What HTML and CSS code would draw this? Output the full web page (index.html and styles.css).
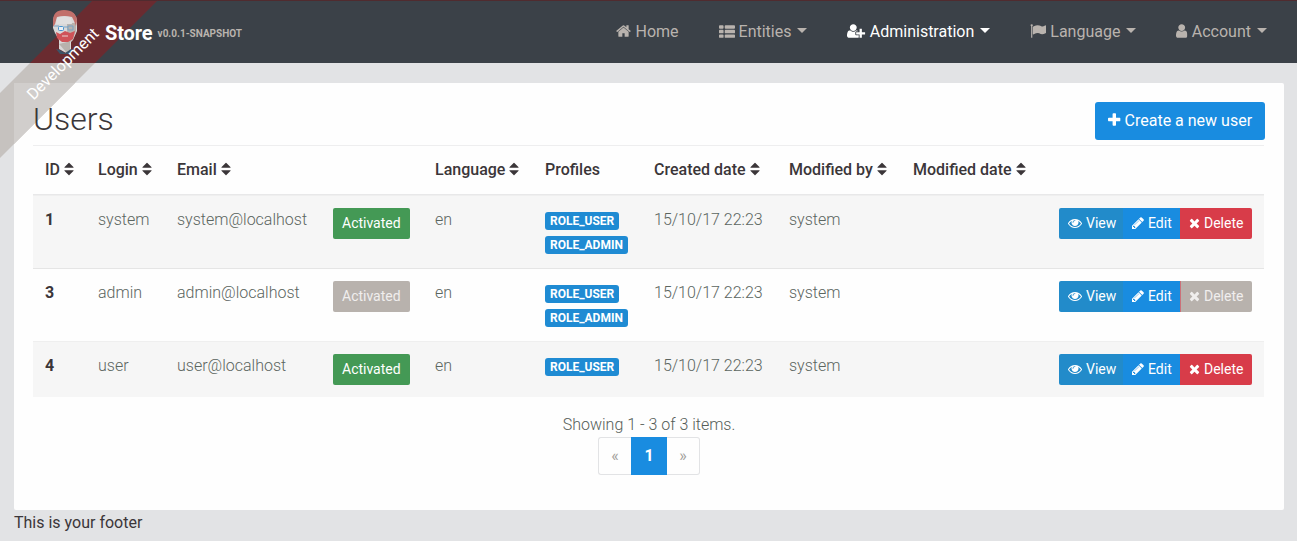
FILE: index.html
```
<!DOCTYPE html>
<html lang="en">
<head>
<meta charset="utf-8">
<title>Users</title>
<link rel="stylesheet" href="styles.css">
</head>
<body>
<svg class="sprite" aria-hidden="true">
<symbol id="home" viewBox="64 0 1664 1792"><path d="M1472 992v480q0 26-19 45t-45 19h-384v-384h-256v384h-384q-26 0-45-19t-19-45v-480q0-1 .5-3t.5-3l575-474 575 474q1 2 1 6zm223-69l-62 74q-8 9-21 11h-3q-13 0-21-7l-692-577-692 577q-12 8-24 7-13-2-21-11l-62-74q-8-10-7-23.5t11-21.5l719-599q32-26 76-26t76 26l244 204v-195q0-14 9-23t23-9h192q14 0 23 9t9 23v408l219 182q10 8 11 21.5t-7 23.5z"/></symbol>
<symbol id="list" viewBox="0 0 1792 1792"><path d="M96 256h320q96 0 96 96v192q0 96-96 96H96q-96 0-96-96V352q0-96 96-96zm640 0h960q96 0 96 96v192q0 96-96 96H736q-96 0-96-96V352q0-96 96-96zM96 768h320q96 0 96 96v192q0 96-96 96H96q-96 0-96-96V864q0-96 96-96zm640 0h960q96 0 96 96v192q0 96-96 96H736q-96 0-96-96V864q0-96 96-96zM96 1280h320q96 0 96 96v192q0 96-96 96H96q-96 0-96-96v-192q0-96 96-96zm640 0h960q96 0 96 96v192q0 96-96 96H736q-96 0-96-96v-192q0-96 96-96z"/></symbol>
<symbol id="user-plus" viewBox="0 0 2048 1792"><path d="M704 896q-159 0-271.5-112.5t-112.5-271.5 112.5-271.5 271.5-112.5 271.5 112.5 112.5 271.5-112.5 271.5-271.5 112.5zm960 128h352q13 0 22.5 9.5t9.5 22.5v192q0 13-9.5 22.5t-22.5 9.5h-352v352q0 13-9.5 22.5t-22.5 9.5h-192q-13 0-22.5-9.5t-9.5-22.5v-352h-352q-13 0-22.5-9.5t-9.5-22.5v-192q0-13 9.5-22.5t22.5-9.5h352v-352q0-13 9.5-22.5t22.5-9.5h192q13 0 22.5 9.5t9.5 22.5v352zm-736 224q0 52 38 90t90 38h256v238q-68 50-171 50h-874q-121 0-194-69t-73-190q0-53 3.5-103.5t14-109 26.5-108.5 43-97.5 62-81 85.5-53.5 111.5-20q19 0 39 17 79 61 154.5 91.5t164.5 30.5 164.5-30.5 154.5-91.5q20-17 39-17 132 0 217 96h-223q-52 0-90 38t-38 90v192z"/></symbol>
<symbol id="flag" viewBox="0 0 1792 1792"><path d="M320 256q0 72-64 110v1266q0 13-9.5 22.5t-22.5 9.5h-64q-13 0-22.5-9.5t-9.5-22.5v-1266q-64-38-64-110 0-53 37.5-90.5t90.5-37.5 90.5 37.5 37.5 90.5zm1472 64v763q0 25-12.5 38.5t-39.5 27.5q-215 116-369 116-61 0-123.5-22t-108.5-48-115.5-48-142.5-22q-192 0-464 146-17 9-33 9-26 0-45-19t-19-45v-742q0-32 31-55 21-14 79-43 236-120 421-120 107 0 200 29t219 88q38 19 88 19 54 0 117.5-21t110-47 88-47 54.5-21q26 0 45 19t19 45z"/></symbol>
<symbol id="user" viewBox="256 0 1280 1792"><path d="M1536 1399q0 109-62.5 187t-150.5 78h-854q-88 0-150.5-78t-62.5-187q0-85 8.5-160.5t31.5-152 58.5-131 94-89 134.5-34.5q131 128 313 128t313-128q76 0 134.5 34.5t94 89 58.5 131 31.5 152 8.500 160.500zm-256-887q0 159-112.5 271.5t-271.5 112.5-271.5-112.5-112.5-271.5 112.5-271.5 271.5-112.5 271.5 112.5 112.5 271.5z"/></symbol>
<symbol id="plus" viewBox="192 0 1408 1792"><path d="M1600 736v192q0 40-28 68t-68 28h-416v416q0 40-28 68t-68 28h-192q-40 0-68-28t-28-68v-416h-416q-40 0-68-28t-28-68v-192q0-40 28-68t68-28h416v-416q0-40 28-68t68-28h192q40 0 68 28t28 68v416h416q40 0 68 28t28 68z"/></symbol>
<symbol id="sort" viewBox="384 0 1024 1792"><path d="M1408 1088q0 26-19 45l-448 448q-19 19-45 19t-45-19l-448-448q-19-19-19-45t19-45 45-19h896q26 0 45 19t19 45zm0-384q0 26-19 45t-45 19h-896q-26 0-45-19t-19-45 19-45l448-448q19-19 45-19t45 19l448 448q19 19 19 45z"/></symbol>
<symbol id="eye" viewBox="0 0 1792 1792"><path d="M1664 960q-152-236-381-353 61 104 61 225 0 185-131.5 316.5t-316.5 131.5-316.5-131.5-131.5-316.5q0-121 61-225-229 117-381 353 133 205 333.5 326.5t434.5 121.5 434.5-121.5 333.5-326.5zm-720-384q0-20-14-34t-34-14q-125 0-214.5 89.5t-89.5 214.5q0 20 14 34t34 14 34-14 14-34q0-86 61-147t147-61q20 0 34-14t14-34zm848 384q0 34-20 69-140 230-376.5 368.5t-499.5 138.5-499.5-139-376.5-368q-20-35-20-69t20-69q140-229 376.5-368t499.5-139 499.5 139 376.5 368q20 35 20 69z"/></symbol>
<symbol id="pencil" viewBox="128 0 1536 1792"><path d="M491 1536l91-91-235-235-91 91v107h128v128h107zm523-928q0-22-22-22-10 0-17 7l-542 542q-7 7-7 17 0 22 22 22 10 0 17-7l542-542q7-7 7-17zm-54-192l416 416-832 832h-416v-416zm683 96q0 53-37 90l-166 166-416-416 166-165q36-38 90-38 53 0 91 38l235 234q37 39 37 91z"/></symbol>
<symbol id="times" viewBox="192 0 1408 1792"><path d="M1490 1322q0 40-28 68l-136 136q-28 28-68 28t-68-28l-294-294-294 294q-28 28-68 28t-68-28l-136-136q-28-28-28-68t28-68l294-294-294-294q-28-28-28-68t28-68l136-136q28-28 68-28t68 28l294 294 294-294q28-28 68-28t68 28l136 136q28 28 28 68t-28 68l-294 294 294 294q28 28 28 68z"/></symbol>
</svg>
<div class="ribbon"></div>
<span class="ribbon-text">Development</span>
<nav class="navbar">
  <a class="brand">
    <svg class="logo" viewBox="0 0 28 46">
      <path fill="#d9d8d8" d="M2 13Q3 3 14 3t12 10v10l-4 9-2 2v9l-5 2-7-4V32L4 25 2 20z"/>
      <path fill="#b8b2ad" d="M16 15h9v8l-3 8-3 3v8l-4 2-7-8 8-2z"/>
      <path fill="#c2706b" d="M2 13Q2 2 13 2q12 0 13 11l-1 5-2-5-2-4q-8-2-15 0l-2 7-2 3z"/>
      <path fill="#e0dfdf" d="M6 10q8-3 14 0l1 6H5z"/>
      <path fill="#cf5358" d="M5 24l4 2 5-3 5 2 5-2-2 8-5 3h-6l-5-4z"/>
      <path fill="none" stroke="#e6d5d2" d="M11 28h6"/>
      <g fill="#e9eef3" stroke="#4592cf"><rect x="7.500" y="18.500" width="5" height="4" rx="1"/></g>
      <path fill="none" stroke="#78a3c5" d="M3 18h5m5 1h4m0-1h5v4h-5z"/>
      <path fill="#3d5266" d="M5 41l4 1 5 3 6-4 3 1-4 4H9z"/>
    </svg>
    <span class="brand-name">Store</span><span class="version">v0.0.1-SNAPSHOT</span>
  </a>
  <div class="menu">
    <a><svg class="w-home"><use href="#home"/></svg>Home</a>
    <a><svg class="w-full"><use href="#list"/></svg>Entities<i class="caret"></i></a>
    <a class="active"><svg class="w-plus-user"><use href="#user-plus"/></svg>Administration<i class="caret"></i></a>
    <a><svg class="w-full"><use href="#flag"/></svg>Language<i class="caret"></i></a>
    <a><svg class="w-user"><use href="#user"/></svg>Account<i class="caret"></i></a>
  </div>
</nav>
<main class="card">
  <header class="heading">
    <h2>Users</h2>
    <button class="create"><svg class="w-plus"><use href="#plus"/></svg>Create a new user</button>
  </header>
  <table class="users">
    <colgroup><col class="c-id"><col class="c-login"><col class="c-email"><col class="c-state"><col class="c-lang"><col class="c-prof"><col class="c-created"><col class="c-by"><col class="c-mod"><col></colgroup>
    <thead><tr>
      <th>ID <svg><use href="#sort"/></svg></th><th>Login <svg><use href="#sort"/></svg></th><th>Email <svg><use href="#sort"/></svg></th><th></th><th>Language <svg><use href="#sort"/></svg></th><th>Profiles</th><th>Created date <svg><use href="#sort"/></svg></th><th>Modified by <svg><use href="#sort"/></svg></th><th>Modified date <svg><use href="#sort"/></svg></th><th></th>
    </tr></thead>
    <tbody>
    <tr>
      <td class="id">1</td><td>system</td><td>system@localhost</td><td><button class="btn green">Activated</button></td><td>en</td>
      <td><div class="role"><span>ROLE_USER</span></div><div class="role"><span>ROLE_ADMIN</span></div></td>
      <td>15/10/17 22:23</td><td>system</td><td></td>
      <td><div class="actions"><button class="btn view"><svg class="s-full"><use href="#eye"/></svg>View</button><button class="btn edit"><svg class="s-pencil"><use href="#pencil"/></svg>Edit</button><button class="btn delete"><svg class="s-times"><use href="#times"/></svg>Delete</button></div></td>
    </tr>
    <tr>
      <td class="id">3</td><td>admin</td><td>admin@localhost</td><td><button class="btn muted">Activated</button></td><td>en</td>
      <td><div class="role"><span>ROLE_USER</span></div><div class="role"><span>ROLE_ADMIN</span></div></td>
      <td>15/10/17 22:23</td><td>system</td><td></td>
      <td><div class="actions"><button class="btn view"><svg class="s-full"><use href="#eye"/></svg>View</button><button class="btn edit"><svg class="s-pencil"><use href="#pencil"/></svg>Edit</button><button class="btn delete muted"><svg class="s-times"><use href="#times"/></svg>Delete</button></div></td>
    </tr>
    <tr>
      <td class="id">4</td><td>user</td><td>user@localhost</td><td><button class="btn green">Activated</button></td><td>en</td>
      <td><div class="role"><span>ROLE_USER</span></div></td>
      <td>15/10/17 22:23</td><td>system</td><td></td>
      <td><div class="actions"><button class="btn view"><svg class="s-full"><use href="#eye"/></svg>View</button><button class="btn edit"><svg class="s-pencil"><use href="#pencil"/></svg>Edit</button><button class="btn delete"><svg class="s-times"><use href="#times"/></svg>Delete</button></div></td>
    </tr>
    </tbody>
  </table>
  <p class="count">Showing 1 - 3 of 3 items.</p>
  <div class="pager"><span class="page">«</span><span class="page current">1</span><span class="page">»</span></div>
</main>
<footer>This is your footer</footer>
</body>
</html>
```
FILE: styles.css
```
* { box-sizing: border-box; }
body { margin: 0; height: 541px; overflow: hidden; background: #e2e3e5; color: #3b3639; font: 300 16px/24px Roboto, sans-serif; }
.sprite { position: absolute; width: 0; height: 0; }
svg { fill: currentColor; flex: none; }

.navbar { height: 63px; background: #3b4148; border-top: 1px solid #502b2f; display: flex; justify-content: space-between; padding: 0 30px 0 51px; }
.brand { display: flex; align-items: flex-start; color: #fff; }
.logo { width: 28px; height: 46px; margin-top: 7px; position: relative; z-index: 3; }
.brand-name { font-size: 20px; font-weight: 700; line-height: 30px; margin: 17px 5px 0 26px; letter-spacing: -0.1px; position: relative; z-index: 3; }
.version { font-size: 10px; font-weight: 700; line-height: 14px; margin-top: 26px; color: #b9b3ae; }
.menu { display: flex; gap: 40px; align-items: center; height: 61px; color: #b9b3ae; font-weight: 400; }
.menu a { display: flex; align-items: center; }
.menu svg { height: 16px; margin: -2px 4px 0 0; }
.menu .active { color: #fff; }
.w-home { width: 15px; }
.w-full { width: 16px; }
.w-plus-user { width: 18.300px; }
.w-user { width: 11.400px; }
.caret { border: 5px solid transparent; border-top-color: currentColor; border-bottom: 0; margin: -2px 0 0 6px; }

.ribbon { position: absolute; z-index: 2; top: 0; left: 0; width: 160px; height: 160px; clip-path: polygon(93px 0, 158px 0, 0 158px, 0 93px); background: linear-gradient(#6a2b30 63px, #c6c2bf 63px); }
.ribbon::before { content: ""; position: absolute; inset: 0 0 auto; height: 1px; background: #502b2f; }
.ribbon::after { content: ""; position: absolute; left: 14px; top: 83px; width: 146px; height: 77px; background: #d1cecc; }
.ribbon-text { position: absolute; z-index: 4; left: 3px; top: 52px; width: 120px; text-align: center; color: #fff; font-weight: 400; transform: rotate(-45deg); }

.card { width: 1270px; height: 427px; margin: 20px 0 0 14px; padding: 19px; background: #fefefe; border-radius: 2px; }
.heading { height: 43px; display: flex; justify-content: space-between; align-items: flex-start; }
h2 { margin: 0; font-size: 32px; font-weight: 300; line-height: 35px; position: relative; z-index: 3; }
button { font-family: inherit; border: 0; color: #fff; }
.create { display: flex; align-items: center; justify-content: center; width: 170px; height: 38px; border-radius: 3px; background: #198ce0; font-size: 16px; padding: 0 0 2px; }
.create svg { width: 12.600px; height: 16px; margin: -1px 4px 0 0; }

.users { width: 1231px; table-layout: fixed; border-spacing: 0; }
.c-id { width: 53px; }
.c-login { width: 79px; }
.c-email { width: 156px; }
.c-state { width: 102px; }
.c-lang { width: 110px; }
.c-prof { width: 109px; }
.c-created { width: 135px; }
.c-by { width: 124px; }
.c-mod { width: 146px; }
th, td { padding: 12px 0 12px 12px; border-top: 1px solid #e5e5e5; text-align: left; vertical-align: top; white-space: nowrap; }
td:last-child { padding-right: 12px; }
th { height: 50px; padding-bottom: 0; border-top-color: #eeeeef; border-bottom: 1px solid #e8e8e9; font-weight: 500; }
th svg { width: 10px; height: 16px; vertical-align: -2px; }
td { color: #5b6560; }
tbody tr:nth-child(odd) { background: #f6f6f6; }
tbody tr:first-child td, tbody tr:last-child td { border-top-color: #efefef; }
.id { font-weight: 700; color: #3b3639; }
.btn { display: flex; align-items: center; height: 31px; padding: 0 9px; border-radius: 2px; font-size: 14px; line-height: 21px; font-weight: 400; }
.green { background: #449955; }
.muted { background: #b8b2ad; color: #f0eeed; }
.btn.delete.muted { background: #b8b2ad; border-left: 1px solid #cc7078; padding-left: 8px; }
.actions { display: flex; justify-content: flex-end; }
.view { width: 64px; background: #228bca; border-radius: 2px 0 0 2px; }
.edit { width: 57px; background: #198ce0; border-radius: 0; }
.delete { width: 72px; background: #d83c49; border-radius: 0 2px 2px 0; }
.actions svg { height: 14px; margin: -2px 4px 0 0; }
.s-full { width: 14px; }
.s-pencil { width: 12px; }
.s-times { width: 11px; }
.role { height: 24px; display: flex; align-items: center; padding-top: 1px; }
.role span { height: 18px; padding: 0 5px; border-radius: 3px; background: #1f8bd3; color: #fff; font-size: 12px; font-weight: 700; line-height: 18px; }
.count { margin: 16px 0 0; text-align: center; color: #555d58; }
.pager { display: flex; justify-content: center; }
.page { width: 34px; height: 38px; border: 1px solid #e2e3e5; color: #a39e9b; font-weight: 400; text-align: center; line-height: 36px; }
.page:first-child { border-right: 0; border-radius: 3px 0 0 3px; width: 33px; }
.page:last-child { border-left: 0; border-radius: 0 3px 3px 0; width: 33px; }
.current { width: 36px; background: #198ce0; border-color: #198ce0; color: #fff; font-weight: 700; }
footer { margin: 1px 0 0 14px; font-weight: 400; }
```
